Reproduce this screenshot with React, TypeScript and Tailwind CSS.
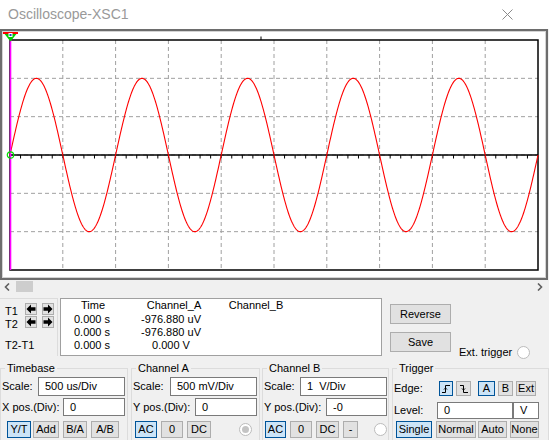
import type { ReactNode } from 'react'
import { clsx } from 'clsx'

// plot geometry, page pixels
const X0 = 10
const X1 = 538
const Y0 = 40
const Y1 = 270
const YC = 155
const DX = (X1 - X0) / 10
const DY = (Y1 - Y0) / 6

function Screen() {
  const wave: string[] = []
  for (let x = X0; x <= X1; x += 0.5) {
    const y = YC - 2 * DY * Math.sin((Math.PI * (x - X0)) / DX)
    wave.push(`${x.toFixed(1)},${y.toFixed(2)}`)
  }
  const ticks: number[] = []
  for (let i = 1; i < 50; i++) ticks.push(X0 + (i * DX) / 5)

  return (
    <svg width={542} height={245} viewBox="3 32 542 245" className="block">
      {Array.from({ length: 9 }, (_, i) => (
        <line key={'v' + i} x1={X0 + (i + 1) * DX} x2={X0 + (i + 1) * DX} y1={Y0} y2={Y1} stroke="#a0a0a0" strokeDasharray="4 3" />
      ))}
      {Array.from({ length: 5 }, (_, i) => (
        <line key={'h' + i} x1={X0} x2={X1} y1={Y0 + (i + 1) * DY} y2={Y0 + (i + 1) * DY} stroke="#a0a0a0" strokeDasharray="4 3" />
      ))}
      <rect x={X0} y={Y0} width={X1 - X0} height={Y1 - Y0} fill="none" stroke="#000" strokeWidth={1.5} />
      <line x1={X0} x2={X1} y1={YC} y2={YC} stroke="#000" strokeWidth={1.5} />
      {ticks.map((t) => (
        <line key={t} x1={t} x2={t} y1={YC} y2={YC + 3.5} stroke="#000" strokeWidth={1} />
      ))}
      <line x1={261} x2={261} y1={36.5} y2={40} stroke="#000" strokeWidth={1} />
      <polyline points={wave.join(' ')} fill="none" stroke="#ff0000" strokeWidth={1.1} />
      <line x1={10.5} x2={10.5} y1={38} y2={Y1} stroke="#ff00ff" strokeWidth={1.6} />
      <circle cx={10.5} cy={YC} r={3.2} fill="none" stroke="#00e000" strokeWidth={1.2} />
      {/* T1 marker */}
      <polygon points="3,32 18,32 10.5,41.5" fill="#00d000" />
      <rect x={3} y={32} width={15} height={2} fill="#ff0000" />
      <rect x={8.5} y={33} width={4} height={4} fill="#fff" />
      <rect x={9.5} y={34} width={2} height={2} fill="#2040d0" />
    </svg>
  )
}

function Btn({ children, className, active }: { children: ReactNode; className: string; active?: boolean }) {
  return (
    <div
      className={clsx(
        'flex shrink-0 items-center justify-center border',
        active ? 'border-[#005499] bg-[#cce4f7]' : 'border-[#adadad] bg-[#e1e1e1]',
        className
      )}
    >
      {children}
    </div>
  )
}

function Field({ children, className }: { children: ReactNode; className: string }) {
  return (
    <div className={clsx('flex shrink-0 items-center border border-[#7a7a7a] bg-white pl-[6px]', className)}>
      {children}
    </div>
  )
}

function Arrow({ right }: { right?: boolean }) {
  return (
    <svg width={10} height={10} viewBox="0 0 10 10" className={right ? '-scale-x-100' : ''}>
      <path d="M0.5 5 L5 0.5 V3.3 H9.5 V6.7 H5 V9.5 Z" fill="#000" />
    </svg>
  )
}

function Group({ title, className, children }: { title: string; className: string; children: ReactNode }) {
  return (
    <fieldset className={clsx('h-[82px] shrink-0 border border-[#dcdcdc]', className)}>
      <legend className="ml-[4px] px-[2px] leading-[13px]">{title}</legend>
      {children}
    </fieldset>
  )
}

function Radio({ filled }: { filled?: boolean }) {
  return (
    <div className="flex h-[13px] w-[13px] shrink-0 items-center justify-center rounded-full border border-[#bcbcbc] bg-white">
      {filled && <div className="h-[7px] w-[7px] rounded-full bg-[#c4c4c4]" />}
    </div>
  )
}

export default function App() {
  return (
    <div className="h-[440px] w-[549px] overflow-hidden bg-[#f0f0f0] font-['Liberation_Sans',Arial,sans-serif] text-[11px] leading-[13px] text-black">
      {/* title bar */}
      <div className="flex h-[29px] items-center justify-between bg-white pl-[8px] pr-[36px]">
        <span className="text-[14px] text-[#999999]">Oscilloscope-XSC1</span>
        <svg width={11} height={11} viewBox="0 0 11 11">
          <path d="M0.5 0.5 L10.5 10.5 M10.5 0.5 L0.5 10.5" stroke="#8a8a8a" strokeWidth={1} />
        </svg>
      </div>

      {/* scope screen */}
      <div className="h-[251px] w-[548px] border-2 border-[#6d6d6d] bg-white">
        <div className="h-full w-full border border-[#d4d4d4]">
          <Screen />
        </div>
      </div>

      {/* horizontal scroll */}
      <div className="flex h-[17px] items-start">
        <svg width={6} height={8} viewBox="0 0 6 8" className="ml-[4px] mt-[3px]">
          <polyline points="5,0.5 1.5,4 5,7.5" fill="none" stroke="#606060" strokeWidth={1.6} />
        </svg>
        <div className="ml-[6px] mt-[1px] h-[11px] w-[17px] bg-[#cdcdcd]" />
        <svg width={6} height={8} viewBox="0 0 6 8" className="ml-auto mr-[6px] mt-[3px]">
          <polyline points="1,0.5 4.5,4 1,7.5" fill="none" stroke="#606060" strokeWidth={1.6} />
        </svg>
      </div>

      {/* cursors and readout */}
      <div className="flex h-[63px]">
        <div className="mt-[1px] flex h-[58px] w-[58px] border-r border-t border-[#dcdcdc]">
          <div className="flex w-[25px] flex-col pl-[5px]">
            <span className="mt-[6px]">T1</span>
            <span>T2</span>
            <span className="mt-[8px] whitespace-nowrap">T2-T1</span>
          </div>
          <div className="mt-[4px] flex flex-col gap-[1px]">
            <div className="flex gap-[5px]">
              <Btn className="h-[12px] w-[12px]"><Arrow /></Btn>
              <Btn className="h-[12px] w-[12px]"><Arrow right /></Btn>
            </div>
            <div className="flex gap-[5px]">
              <Btn className="h-[12px] w-[12px]"><Arrow /></Btn>
              <Btn className="h-[12px] w-[12px]"><Arrow right /></Btn>
            </div>
          </div>
        </div>

        <div className="ml-[2px] mt-[1px] h-[58px] w-[322px] border border-[#a0a0a0] bg-white">
          <div className="flex h-[14px]">
            <span className="w-[64px] text-center">Time</span>
            <span className="w-[96px] pl-[2px] text-center">Channel_A</span>
            <span className="w-[70px] text-center">Channel_B</span>
          </div>
          {[
            ['0.000 s', '-976.880 uV'],
            ['0.000 s', '-976.880 uV'],
            ['0.000 s', '0.000 V'],
          ].map(([t, a], i) => (
            <div key={i} className="flex h-[13px]">
              <span className="w-[62px] text-center">{t}</span>
              <span className="w-[96px] text-center">{a}</span>
            </div>
          ))}
        </div>

        <div className="ml-[8px] mt-[7px] flex flex-col gap-[8px]">
          <Btn className="h-[20px] w-[61px]">Reverse</Btn>
          <Btn className="h-[20px] w-[61px]">Save</Btn>
        </div>
        <div className="ml-[8px] mt-[49px] flex h-[13px] items-center">
          <span className="whitespace-nowrap">Ext. trigger</span>
          <div className="ml-[5px]">
            <Radio />
          </div>
        </div>
      </div>

      {/* control groups */}
      <div className="mt-[2px] flex">
        <Group title="Timebase" className="w-[128px]">
          <div className="mt-[2px] flex h-[19px] items-center justify-between pr-[2px]">
            <span className="pl-[1px]">Scale:</span>
            <Field className="h-[19px] w-[87px]">500 us/Div</Field>
          </div>
          <div className="mt-[2px] flex h-[18px] items-center justify-between pr-[2px]">
            <span className="pl-[1px]">X pos.(Div):</span>
            <Field className="h-[18px] w-[62px]">0</Field>
          </div>
          <div className="ml-[6px] mt-[5px] flex">
            <Btn active className="h-[17px] w-[24px]">Y/T</Btn>
            <Btn className="ml-[2px] h-[17px] w-[26px]">Add</Btn>
            <Btn className="ml-[4px] h-[17px] w-[24px]">B/A</Btn>
            <Btn className="ml-[4px] h-[17px] w-[28px]">A/B</Btn>
          </div>
        </Group>

        <Group title="Channel A" className="ml-[3px] w-[129px]">
          <div className="mt-[2px] flex h-[19px] items-center justify-between pr-[2px]">
            <span className="pl-[1px]">Scale:</span>
            <Field className="h-[19px] w-[87px]">500 mV/Div</Field>
          </div>
          <div className="mt-[2px] flex h-[18px] items-center justify-between pr-[2px]">
            <span className="pl-[1px]">Y pos.(Div):</span>
            <Field className="h-[18px] w-[62px]">0</Field>
          </div>
          <div className="ml-[3px] mt-[5px] flex items-center">
            <Btn active className="h-[17px] w-[22px]">AC</Btn>
            <Btn className="ml-[4px] h-[17px] w-[22px]">0</Btn>
            <Btn className="ml-[4px] h-[17px] w-[24px]">DC</Btn>
            <div className="ml-[28px]">
              <Radio filled />
            </div>
          </div>
        </Group>

        <Group title="Channel B" className="ml-[2px] w-[127px]">
          <div className="mt-[2px] flex h-[19px] items-center justify-between pr-[1px]">
            <span className="pl-[1px]">Scale:</span>
            <Field className="h-[19px] w-[87px]">1&nbsp;&nbsp;V/Div</Field>
          </div>
          <div className="mt-[2px] flex h-[18px] items-center justify-between pr-[1px]">
            <span className="pl-[1px]">Y pos.(Div):</span>
            <Field className="h-[18px] w-[61px]">-0</Field>
          </div>
          <div className="ml-[2px] mt-[5px] flex items-center">
            <Btn active className="h-[17px] w-[21px]">AC</Btn>
            <Btn className="ml-[4px] h-[17px] w-[22px]">0</Btn>
            <Btn className="ml-[4px] h-[17px] w-[23px]">DC</Btn>
            <Btn className="ml-[4px] h-[17px] w-[15px]">-</Btn>
            <div className="ml-[16px]">
              <Radio />
            </div>
          </div>
        </Group>

        <Group title="Trigger" className="ml-[3px] w-[157px]">
          <div className="mt-[6px] flex h-[15px] items-center">
            <span className="w-[46px] pl-[1px]">Edge:</span>
            <Btn active className="h-[15px] w-[14px]">
              <svg width={10} height={10} viewBox="0 0 10 10">
                <path d="M1 8.5 H4.5 V1.5 H9 M4.5 4 L3 5.5 M4.5 4 L6 5.5" fill="none" stroke="#000" strokeWidth={1} />
              </svg>
            </Btn>
            <Btn className="ml-[3px] h-[15px] w-[15px]">
              <svg width={10} height={10} viewBox="0 0 10 10">
                <path d="M1 1.5 H4.5 V8.5 H9 M4.5 6 L3 4.5 M4.5 6 L6 4.5" fill="none" stroke="#000" strokeWidth={1} />
              </svg>
            </Btn>
            <Btn active className="ml-[7px] h-[15px] w-[17px]">A</Btn>
            <Btn className="ml-[3px] h-[15px] w-[15px]">B</Btn>
            <Btn className="ml-[3px] h-[15px] w-[20px]">Ext</Btn>
          </div>
          <div className="mt-[6px] flex h-[17px] items-center">
            <span className="w-[44px] pl-[1px]">Level:</span>
            <Field className="h-[17px] w-[76px]">0</Field>
            <Field className="h-[17px] w-[26px]">V</Field>
          </div>
          <div className="ml-[3px] mt-[2px] flex">
            <Btn active className="h-[17px] w-[36px]">Single</Btn>
            <Btn className="ml-[4px] h-[17px] w-[40px]">Normal</Btn>
            <Btn className="ml-[2px] h-[17px] w-[29px]">Auto</Btn>
            <Btn className="ml-[3px] h-[17px] w-[29px]">None</Btn>
          </div>
        </Group>
      </div>
    </div>
  )
}
